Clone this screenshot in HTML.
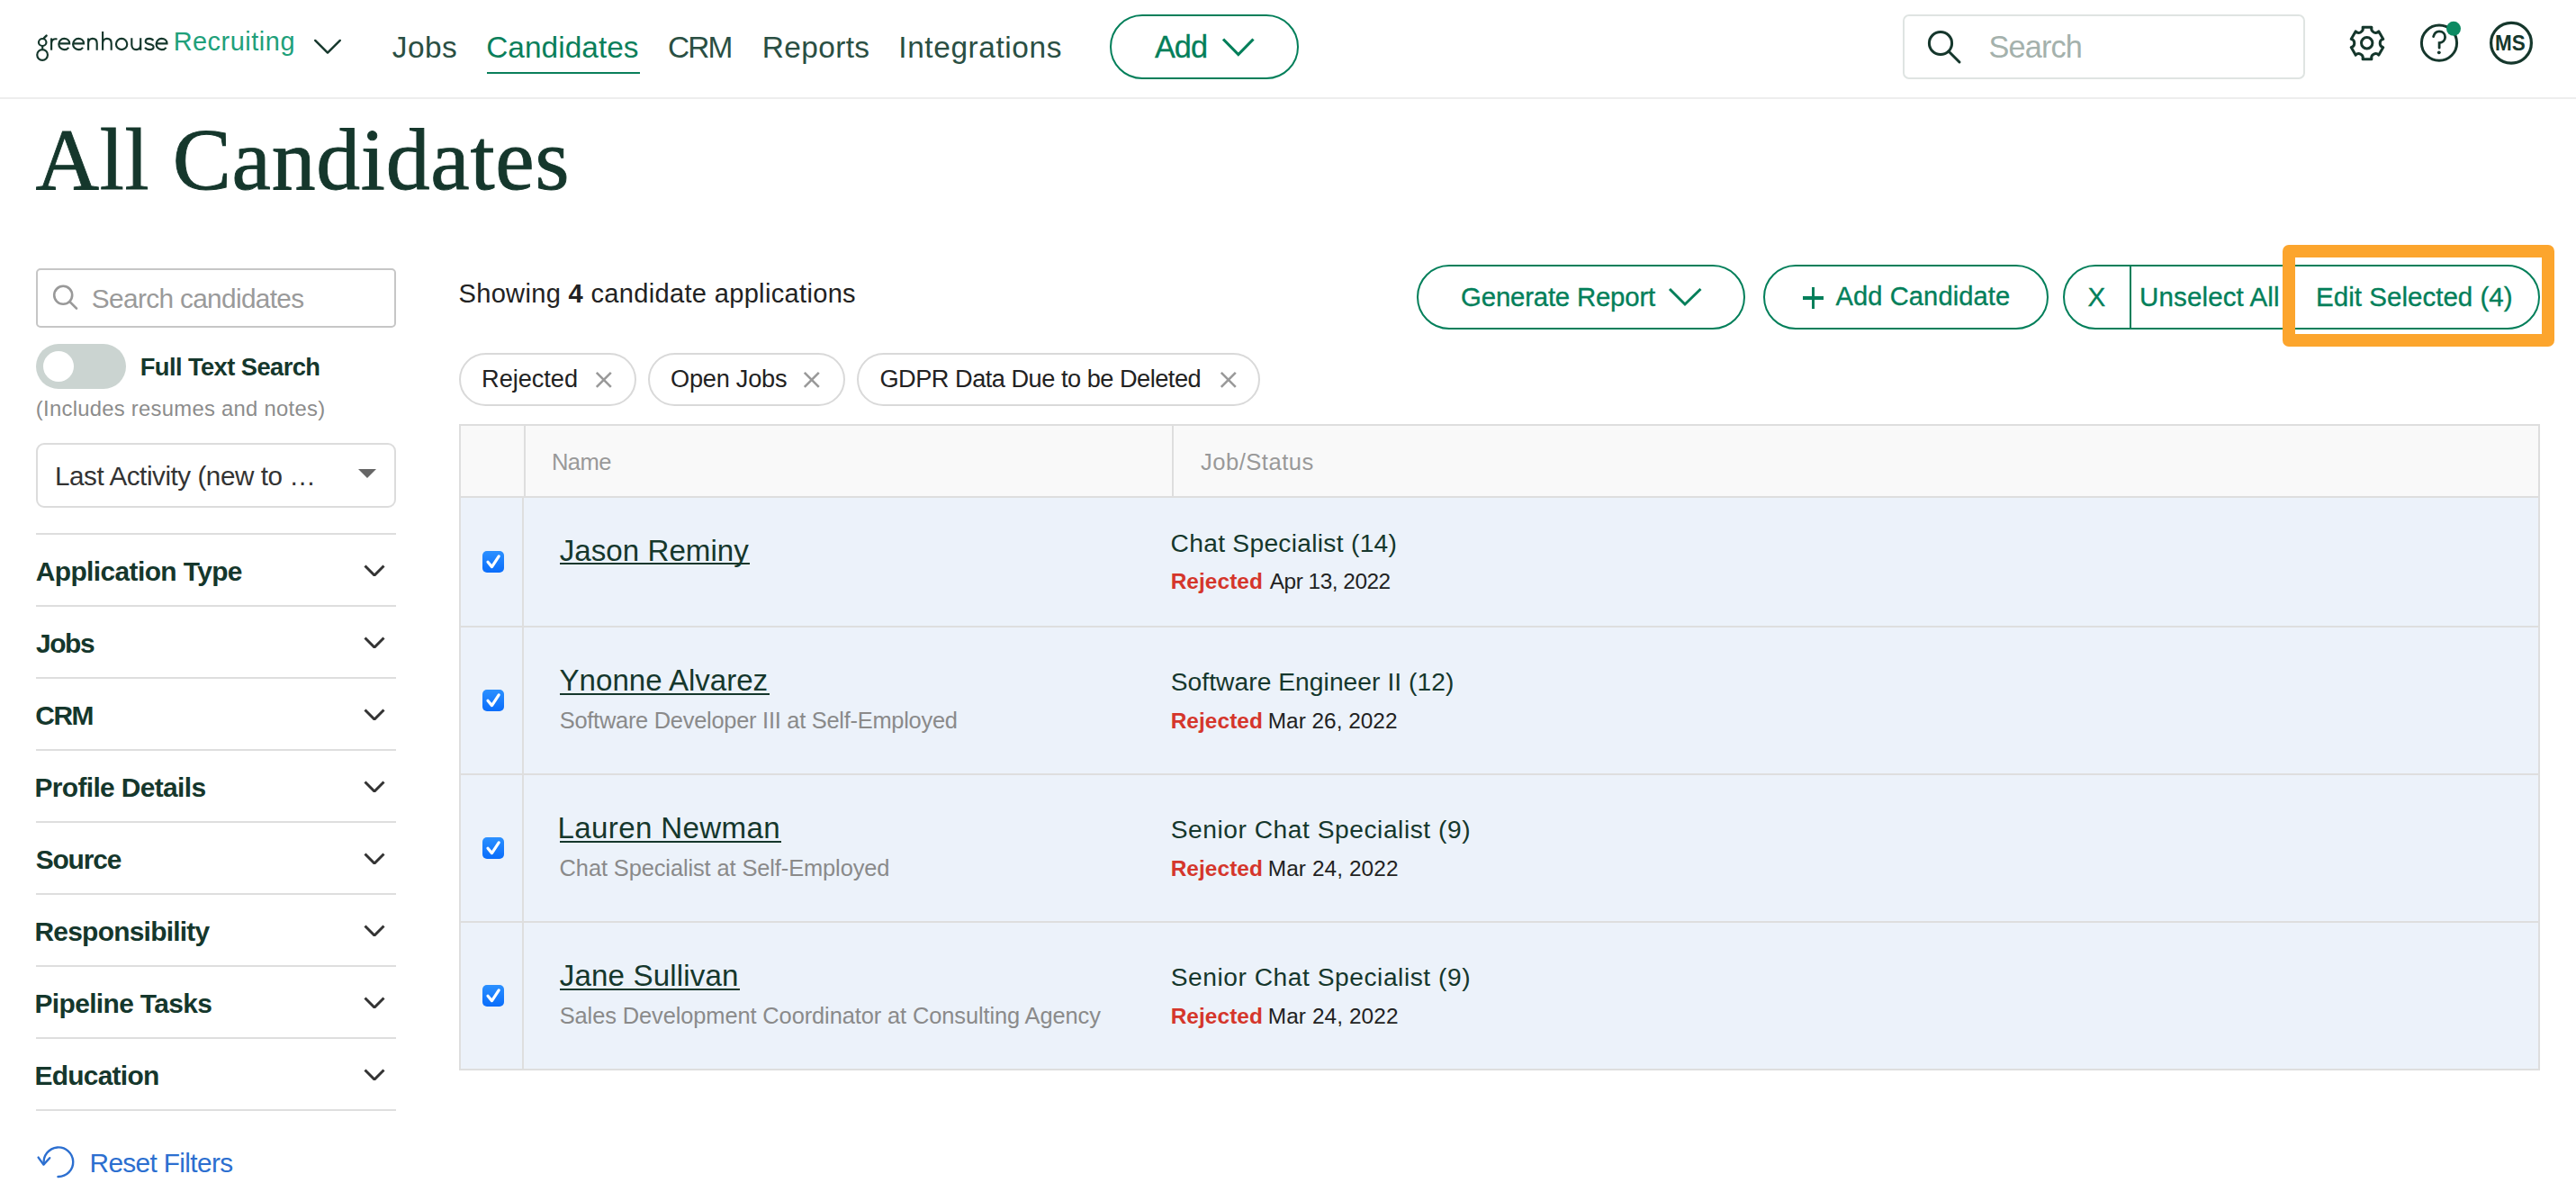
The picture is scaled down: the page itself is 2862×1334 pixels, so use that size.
<!DOCTYPE html>
<html><head><meta charset="utf-8"><style>
html,body{margin:0;padding:0;background:#fff;width:2862px;height:1334px;overflow:hidden;position:relative;font-family:"Liberation Sans",sans-serif;}
.t{position:absolute;white-space:nowrap;line-height:1;}
.r{position:absolute;}
b{font-weight:700;}
</style></head><body>
<svg class="r" style="left:0;top:0" width="200" height="80"><g fill="none" stroke="#15372c" stroke-width="2.15"><ellipse cx="47.2" cy="47" rx="4.25" ry="4"/><path d="M47.2 51 V54.4"/><circle cx="47.1" cy="61" r="5.85"/><path d="M49 42.2 L51.6 39.6" stroke-linecap="round" stroke-width="2.4"/><path d="M57.1 42.4 V55.7"/><path d="M57.1 47.5 C57.4 44.3 59.5 42.9 62.6 43.3" stroke-linecap="round"/><path d="M65.40 48.4 H77.20 C77.20 44.9 74.60 42.9 71.30 42.9 C68.00 42.9 65.30 45.6 65.30 49 C65.30 52.4 68.00 55.1 71.30 55.1 C73.50 55.1 75.20 54.3 76.30 52.8"/><path d="M81.20 48.4 H93.00 C93.00 44.9 90.40 42.9 87.10 42.9 C83.80 42.9 81.10 45.6 81.10 49 C81.10 52.4 83.80 55.1 87.10 55.1 C89.30 55.1 91.00 54.3 92.10 52.8"/><path d="M98.1 42.4 V55.7 M98.1 48.2 C98.1 44.8 100.3 42.9 102.9 42.9 C105.7 42.9 107.7 44.8 107.7 48.2 V55.7"/><path d="M114.1 35 V55.7 M114.1 48.2 C114.1 44.8 116.3 42.9 118.9 42.9 C121.7 42.9 123.7 44.8 123.7 48.2 V55.7"/><circle cx="135.1" cy="49" r="6.15"/><path d="M146.3 42.3 V49.8 C146.3 53.2 148.5 55.1 151.2 55.1 C154 55.1 156.2 53.2 156.2 49.8 M156.2 42.3 V55.7"/><path d="M170.2 45 C169.5 43.6 168 42.9 166 42.9 C163.4 42.9 161.7 44.2 161.7 46.1 C161.7 48.2 163.7 48.7 166.1 49.1 C168.7 49.5 170.6 50.3 170.6 52.2 C170.6 54.2 168.6 55.1 166 55.1 C163.7 55.1 162 54.3 161.1 52.8"/><path d="M173.70 48.4 H185.50 C185.50 44.9 182.90 42.9 179.60 42.9 C176.30 42.9 173.60 45.6 173.60 49 C173.60 52.4 176.30 55.1 179.60 55.1 C181.80 55.1 183.50 54.3 184.60 52.8"/></g></svg>
<div class="t" style="left:192.63px;top:31.62px;font-size:28.92px;color:#20a07a;letter-spacing:0.524px;">Recruiting</div>
<svg class="r" style="left:0;top:0" width="2862" height="110"><polyline points="350.2,44.9 364,58.6 377.8,44.9" fill="none" stroke="#15372c" stroke-width="2.4" stroke-linecap="round" stroke-linejoin="round"/></svg>
<div class="t" style="left:435.78px;top:36.30px;font-size:33.43px;color:#2a4f43;letter-spacing:0.462px;">Jobs</div>
<div class="t" style="left:540.20px;top:36.30px;font-size:33.43px;color:#0a7f5b;letter-spacing:0.027px;">Candidates</div>
<div class="r" style="left:541px;top:80px;width:170px;height:2px;background:#0a7f5b"></div>
<div class="t" style="left:742.10px;top:36.30px;font-size:33.43px;color:#2a4f43;letter-spacing:-1.928px;">CRM</div>
<div class="t" style="left:846.76px;top:36.30px;font-size:33.43px;color:#2a4f43;letter-spacing:0.373px;">Reports</div>
<div class="t" style="left:998.31px;top:36.30px;font-size:33.43px;color:#2a4f43;letter-spacing:0.583px;">Integrations</div>
<div class="r" style="left:1233px;top:16px;width:210px;height:71.5px;border:2.2px solid #037f5a;border-radius:40px;box-sizing:border-box"></div>
<div class="t" style="left:1282.93px;top:34.86px;font-size:34.30px;color:#037f5a;letter-spacing:-0.996px;-webkit-text-stroke:0.3px #037f5a;">Add</div>
<svg class="r" style="left:0;top:0" width="2862" height="110"><polyline points="1359,43.5 1375.8,60.5 1392.5,43.5" fill="none" stroke="#037f5a" stroke-width="3.2" stroke-linecap="butt" stroke-linejoin="miter"/></svg>
<div class="r" style="left:2114px;top:16px;width:447px;height:71.5px;border:2px solid #dfe4e2;border-radius:7px;box-sizing:border-box"></div>
<svg class="r" style="left:0;top:0" width="2862" height="110"><circle cx="2156" cy="48" r="12.6" fill="none" stroke="#15372c" stroke-width="3"/><line x1="2166" y1="58" x2="2177" y2="69" stroke="#15372c" stroke-width="3" stroke-linecap="round"/></svg>
<div class="t" style="left:2209.44px;top:34.96px;font-size:34.30px;color:#a4b1ac;letter-spacing:-0.836px;">Search</div>
<svg class="r" style="left:0;top:0" width="2862" height="110"><path d="M2625.08 30.27 L2634.92 30.27 A4.75 4.75 0 0 0 2642.90 34.88 L2642.90 34.88 L2647.81 43.39 A4.75 4.75 0 0 0 2647.81 52.61 L2647.81 52.61 L2642.90 61.12 A4.75 4.75 0 0 0 2634.92 65.73 L2634.92 65.73 L2625.08 65.73 A4.75 4.75 0 0 0 2617.10 61.12 L2617.10 61.12 L2612.19 52.61 A4.75 4.75 0 0 0 2612.19 43.39 L2612.19 43.39 L2617.10 34.88 A4.75 4.75 0 0 0 2625.08 30.27Z" fill="none" stroke="#15372c" stroke-width="3" stroke-linejoin="round"/><circle cx="2629.7" cy="47.8" r="6.2" fill="none" stroke="#15372c" stroke-width="3"/><circle cx="2710" cy="47.7" r="19.6" fill="none" stroke="#15372c" stroke-width="3"/><path d="M2703.6 40.6 C2704.6 36.6 2707 34.8 2710 34.8 C2714 34.8 2716.6 37.6 2716.6 41.2 C2716.6 45 2713.5 47.2 2710.1 47.6 L2710.1 53.2" fill="none" stroke="#15372c" stroke-width="2.8" stroke-linecap="round"/><circle cx="2709.8" cy="58.3" r="1.9" fill="#15372c"/><circle cx="2726" cy="31.8" r="8" fill="#0c8a62"/><circle cx="2790" cy="47.7" r="22.4" fill="none" stroke="#15372c" stroke-width="3.2"/></svg>
<div class="t" style="left:2772.42px;top:37.04px;font-size:23.69px;color:#15372c;font-weight:700;transform:scaleX(0.9484);transform-origin:1.58px 0;">MS</div>
<div class="r" style="left:0px;top:108px;width:2862px;height:2px;background:#ededed"></div>
<div class="t" style="left:39.45px;top:129.07px;font-size:97.71px;color:#15372c;font-family:'Liberation Serif',serif;letter-spacing:0.740px;-webkit-text-stroke:0.9px #15372c;">All Candidates</div>
<div class="r" style="left:40px;top:298px;width:400px;height:66px;border:2px solid #c6c6c6;border-radius:5px;box-sizing:border-box"></div>
<svg class="r" style="left:0;top:280" width="460" height="100"><circle cx="70.2" cy="47.8" r="10" fill="none" stroke="#999" stroke-width="2.6"/><line x1="77.5" y1="55.2" x2="85" y2="62.7" stroke="#999" stroke-width="2.6" stroke-linecap="round"/></svg>
<div class="t" style="left:101.85px;top:317.18px;font-size:29.80px;color:#9a9a9a;letter-spacing:-0.657px;">Search candidates</div>
<div class="r" style="left:40px;top:382px;width:100px;height:50px;background:#cbd4d1;border-radius:25px"></div>
<div class="r" style="left:48px;top:390px;width:34px;height:34px;background:#fff;border-radius:50%"></div>
<div class="t" style="left:155.67px;top:394.37px;font-size:27.33px;color:#15372c;font-weight:700;letter-spacing:-0.581px;">Full Text Search</div>
<div class="t" style="left:39.82px;top:441.72px;font-size:23.84px;color:#8c8c8c;letter-spacing:0.275px;">(Includes resumes and notes)</div>
<div class="r" style="left:40px;top:492px;width:400px;height:72px;border:2px solid #dcdcdc;border-radius:9px;box-sizing:border-box"></div>
<div class="t" style="left:61.07px;top:513.80px;font-size:29.65px;color:#333;letter-spacing:-0.454px;">Last Activity (new to …</div>
<svg class="r" style="left:390;top:515" width="40" height="25"><polygon points="8,6 28,6 18,16" fill="#666"/></svg>
<div class="r" style="left:40px;top:592px;width:400px;height:2.2000000000000455px;background:#dedede"></div>
<div class="t" style="left:39.75px;top:619.85px;font-size:29.94px;color:#15372c;font-weight:700;letter-spacing:-0.613px;">Application Type</div>
<svg class="r" style="left:400px;top:620px" width="32" height="20"><polyline points="5.5,8.5 16,19 26.5,8.5" fill="none" stroke="#333" stroke-width="3"/></svg>
<div class="r" style="left:40px;top:672px;width:400px;height:2.2000000000000455px;background:#dedede"></div>
<div class="t" style="left:40.05px;top:699.85px;font-size:29.94px;color:#15372c;font-weight:700;letter-spacing:-1.454px;">Jobs</div>
<svg class="r" style="left:400px;top:700px" width="32" height="20"><polyline points="5.5,8.5 16,19 26.5,8.5" fill="none" stroke="#333" stroke-width="3"/></svg>
<div class="r" style="left:40px;top:752px;width:400px;height:2.2000000000000455px;background:#dedede"></div>
<div class="t" style="left:39.27px;top:779.85px;font-size:29.94px;color:#15372c;font-weight:700;letter-spacing:-1.445px;">CRM</div>
<svg class="r" style="left:400px;top:780px" width="32" height="20"><polyline points="5.5,8.5 16,19 26.5,8.5" fill="none" stroke="#333" stroke-width="3"/></svg>
<div class="r" style="left:40px;top:832px;width:400px;height:2.2000000000000455px;background:#dedede"></div>
<div class="t" style="left:38.50px;top:859.85px;font-size:29.94px;color:#15372c;font-weight:700;letter-spacing:-0.651px;">Profile Details</div>
<svg class="r" style="left:400px;top:860px" width="32" height="20"><polyline points="5.5,8.5 16,19 26.5,8.5" fill="none" stroke="#333" stroke-width="3"/></svg>
<div class="r" style="left:40px;top:912px;width:400px;height:2.2000000000000455px;background:#dedede"></div>
<div class="t" style="left:39.64px;top:939.85px;font-size:29.94px;color:#15372c;font-weight:700;letter-spacing:-1.148px;">Source</div>
<svg class="r" style="left:400px;top:940px" width="32" height="20"><polyline points="5.5,8.5 16,19 26.5,8.5" fill="none" stroke="#333" stroke-width="3"/></svg>
<div class="r" style="left:40px;top:992px;width:400px;height:2.2000000000000455px;background:#dedede"></div>
<div class="t" style="left:38.50px;top:1019.85px;font-size:29.94px;color:#15372c;font-weight:700;letter-spacing:-0.765px;">Responsibility</div>
<svg class="r" style="left:400px;top:1020px" width="32" height="20"><polyline points="5.5,8.5 16,19 26.5,8.5" fill="none" stroke="#333" stroke-width="3"/></svg>
<div class="r" style="left:40px;top:1072px;width:400px;height:2.2000000000000455px;background:#dedede"></div>
<div class="t" style="left:38.50px;top:1099.85px;font-size:29.94px;color:#15372c;font-weight:700;letter-spacing:-0.642px;">Pipeline Tasks</div>
<svg class="r" style="left:400px;top:1100px" width="32" height="20"><polyline points="5.5,8.5 16,19 26.5,8.5" fill="none" stroke="#333" stroke-width="3"/></svg>
<div class="r" style="left:40px;top:1152px;width:400px;height:2.2000000000000455px;background:#dedede"></div>
<div class="t" style="left:38.50px;top:1179.85px;font-size:29.94px;color:#15372c;font-weight:700;letter-spacing:-0.746px;">Education</div>
<svg class="r" style="left:400px;top:1180px" width="32" height="20"><polyline points="5.5,8.5 16,19 26.5,8.5" fill="none" stroke="#333" stroke-width="3"/></svg>
<div class="r" style="left:40px;top:1232px;width:400px;height:2.2000000000000455px;background:#dedede"></div>
<svg class="r" style="left:0;top:1260" width="100" height="60"><path d="M48.8 33 A16.3 16.3 0 1 1 64.5 47" fill="none" stroke="#2c6fd0" stroke-width="2.4" stroke-linecap="round"/><polyline points="42.6,25.6 48.4,33.6 55.2,26.2" fill="none" stroke="#2c6fd0" stroke-width="2.4" stroke-linecap="round" stroke-linejoin="round"/></svg>
<div class="t" style="left:99.56px;top:1277.48px;font-size:29.80px;color:#2c6fd0;letter-spacing:-0.643px;">Reset Filters</div>
<div class="t" style="left:509.48px;top:312.29px;font-size:29.07px;color:#222;letter-spacing:0.315px;">Showing <b>4</b> candidate applications</div>
<div class="r" style="left:510.2px;top:392px;width:197.00000000000006px;height:58.5px;border:2px solid #d9d9d9;border-radius:30px;box-sizing:border-box"></div>
<div class="t" style="left:535.07px;top:406.79px;font-size:27.18px;color:#222;letter-spacing:-0.042px;">Rejected</div>
<svg class="r" style="left:658.7px;top:410px" width="24" height="24"><path d="M3.8 3.8 L19.8 19.8 M19.8 3.8 L3.8 19.8" stroke="#999" stroke-width="2.6"/></svg>
<div class="r" style="left:720.2px;top:392px;width:219.19999999999993px;height:58.5px;border:2px solid #d9d9d9;border-radius:30px;box-sizing:border-box"></div>
<div class="t" style="left:745.01px;top:406.79px;font-size:27.18px;color:#222;letter-spacing:-0.241px;">Open Jobs</div>
<svg class="r" style="left:890.0px;top:410px" width="24" height="24"><path d="M3.8 3.8 L19.8 19.8 M19.8 3.8 L3.8 19.8" stroke="#999" stroke-width="2.6"/></svg>
<div class="r" style="left:952.3px;top:392px;width:447.9000000000001px;height:58.5px;border:2px solid #d9d9d9;border-radius:30px;box-sizing:border-box"></div>
<div class="t" style="left:977.43px;top:406.79px;font-size:27.18px;color:#222;letter-spacing:-0.493px;">GDPR Data Due to be Deleted</div>
<svg class="r" style="left:1352.5px;top:410px" width="24" height="24"><path d="M3.8 3.8 L19.8 19.8 M19.8 3.8 L3.8 19.8" stroke="#999" stroke-width="2.6"/></svg>
<div class="r" style="left:1574px;top:294px;width:365px;height:71.5px;border:2.2px solid #037f5a;border-radius:40px;box-sizing:border-box"></div>
<div class="t" style="left:1623.12px;top:314.65px;font-size:29.36px;color:#037f5a;letter-spacing:-0.190px;-webkit-text-stroke:0.35px #037f5a;">Generate Report</div>
<svg class="r" style="left:1850px;top:315px" width="45" height="30"><polyline points="5,6 22,23 39.5,6" fill="none" stroke="#037f5a" stroke-width="3"/></svg>
<div class="r" style="left:1959px;top:294px;width:317px;height:71.5px;border:2.2px solid #037f5a;border-radius:40px;box-sizing:border-box"></div>
<div class="r" style="left:2002.5px;top:329.3px;width:23.799999999999955px;height:3.599999999999966px;background:#037f5a"></div>
<div class="r" style="left:2012.6px;top:319px;width:3.6000000000001364px;height:24px;background:#037f5a"></div>
<div class="t" style="left:2039.44px;top:315.09px;font-size:29.07px;color:#037f5a;letter-spacing:0.122px;-webkit-text-stroke:0.35px #037f5a;">Add Candidate</div>
<div class="r" style="left:2292px;top:294px;width:530px;height:71.5px;border:2.2px solid #037f5a;border-radius:40px;box-sizing:border-box"></div>
<div class="r" style="left:2365.5px;top:294px;width:2.300000000000182px;height:71.5px;background:#037f5a"></div>
<div class="t" style="left:2319.54px;top:314.92px;font-size:29.51px;color:#037f5a;-webkit-text-stroke:0.35px #037f5a;">X</div>
<div class="t" style="left:2377.12px;top:314.92px;font-size:29.51px;color:#037f5a;letter-spacing:0.119px;-webkit-text-stroke:0.35px #037f5a;">Unselect All</div>
<div class="t" style="left:2573.08px;top:314.92px;font-size:29.51px;color:#037f5a;letter-spacing:0.027px;-webkit-text-stroke:0.35px #037f5a;">Edit Selected (4)</div>
<div class="r" style="left:2536.4px;top:272.4px;width:301.5999999999999px;height:113.0px;border:14px solid #fca52d;border-radius:7px;box-sizing:border-box"></div>
<div class="r" style="left:510px;top:471px;width:2312px;height:718px;border:2px solid #dedede;box-sizing:border-box;background:#ecf2fa"></div>
<div class="r" style="left:512px;top:473px;width:2308px;height:78px;background:#f9f9f9"></div>
<div class="r" style="left:512px;top:551px;width:2308px;height:2px;background:#dedede"></div>
<div class="r" style="left:582px;top:473px;width:2px;height:78px;background:#dedede"></div>
<div class="r" style="left:1302px;top:473px;width:2px;height:78px;background:#dedede"></div>
<div class="r" style="left:580px;top:553px;width:2px;height:634px;background:#dedede"></div>
<div class="r" style="left:512px;top:695px;width:2308px;height:2px;background:#dedede"></div>
<div class="r" style="left:512px;top:859px;width:2308px;height:2px;background:#dedede"></div>
<div class="r" style="left:512px;top:1023px;width:2308px;height:2px;background:#dedede"></div>
<div class="t" style="left:612.90px;top:501.23px;font-size:25.60px;color:#999;letter-spacing:-0.551px;">Name</div>
<div class="t" style="left:1333.90px;top:500.73px;font-size:25.60px;color:#999;letter-spacing:0.493px;">Job/Status</div>
<svg class="r" style="left:536px;top:612.0px" width="24" height="24"><defs><linearGradient id="cg0" x1="0" y1="0" x2="0" y2="1"><stop offset="0" stop-color="#2b90ff"/><stop offset="1" stop-color="#0a6dfb"/></linearGradient></defs><rect x="0" y="0" width="24" height="24" rx="5" fill="url(#cg0)"/><polyline points="6,12.3 10.5,17.6 18.2,5.9" fill="none" stroke="#fff" stroke-width="3.2" stroke-linecap="round" stroke-linejoin="round"/></svg>
<div class="t" style="left:621.78px;top:594.75px;font-size:33.14px;color:#15372c;letter-spacing:0.016px;">Jason Reminy</div>
<div class="r" style="left:622.3px;top:625.3px;width:211.10000000000002px;height:2.0px;background:#15372c"></div>
<div class="t" style="left:1300.57px;top:588.83px;font-size:28.20px;color:#15372c;letter-spacing:0.285px;">Chat Specialist (14)</div>
<div class="t" style="left:1300.67px;top:634.43px;font-size:24.42px;color:#d5362b;font-weight:700;letter-spacing:0.073px;">Rejected</div>
<div class="t" style="left:1410.75px;top:634.43px;font-size:24.42px;color:#222;letter-spacing:-0.486px;">Apr 13, 2022</div>
<svg class="r" style="left:536px;top:766.0px" width="24" height="24"><defs><linearGradient id="cg1" x1="0" y1="0" x2="0" y2="1"><stop offset="0" stop-color="#2b90ff"/><stop offset="1" stop-color="#0a6dfb"/></linearGradient></defs><rect x="0" y="0" width="24" height="24" rx="5" fill="url(#cg1)"/><polyline points="6,12.3 10.5,17.6 18.2,5.9" fill="none" stroke="#fff" stroke-width="3.2" stroke-linecap="round" stroke-linejoin="round"/></svg>
<div class="t" style="left:621.57px;top:739.45px;font-size:33.14px;color:#15372c;letter-spacing:-0.032px;">Ynonne Alvarez</div>
<div class="r" style="left:622.3px;top:770.0px;width:232.5px;height:2.0px;background:#15372c"></div>
<div class="t" style="left:621.74px;top:788.37px;font-size:25.44px;color:#8a8a8a;letter-spacing:-0.269px;">Software Developer III at Self-Employed</div>
<div class="t" style="left:1300.72px;top:743.03px;font-size:28.20px;color:#15372c;letter-spacing:0.053px;">Software Engineer II (12)</div>
<div class="t" style="left:1300.67px;top:789.23px;font-size:24.42px;color:#d5362b;font-weight:700;letter-spacing:0.073px;">Rejected</div>
<div class="t" style="left:1408.80px;top:789.23px;font-size:24.42px;color:#222;letter-spacing:-0.013px;">Mar 26, 2022</div>
<svg class="r" style="left:536px;top:930.0px" width="24" height="24"><defs><linearGradient id="cg2" x1="0" y1="0" x2="0" y2="1"><stop offset="0" stop-color="#2b90ff"/><stop offset="1" stop-color="#0a6dfb"/></linearGradient></defs><rect x="0" y="0" width="24" height="24" rx="5" fill="url(#cg2)"/><polyline points="6,12.3 10.5,17.6 18.2,5.9" fill="none" stroke="#fff" stroke-width="3.2" stroke-linecap="round" stroke-linejoin="round"/></svg>
<div class="t" style="left:619.58px;top:903.45px;font-size:33.14px;color:#15372c;letter-spacing:0.340px;">Lauren Newman</div>
<div class="r" style="left:622.3px;top:934.0px;width:246.10000000000002px;height:2.0px;background:#15372c"></div>
<div class="t" style="left:621.61px;top:952.37px;font-size:25.44px;color:#8a8a8a;letter-spacing:-0.116px;">Chat Specialist at Self-Employed</div>
<div class="t" style="left:1300.72px;top:907.03px;font-size:28.20px;color:#15372c;letter-spacing:0.529px;">Senior Chat Specialist (9)</div>
<div class="t" style="left:1300.67px;top:953.23px;font-size:24.42px;color:#d5362b;font-weight:700;letter-spacing:0.073px;">Rejected</div>
<div class="t" style="left:1408.80px;top:953.23px;font-size:24.42px;color:#222;letter-spacing:0.078px;">Mar 24, 2022</div>
<svg class="r" style="left:536px;top:1094.0px" width="24" height="24"><defs><linearGradient id="cg3" x1="0" y1="0" x2="0" y2="1"><stop offset="0" stop-color="#2b90ff"/><stop offset="1" stop-color="#0a6dfb"/></linearGradient></defs><rect x="0" y="0" width="24" height="24" rx="5" fill="url(#cg3)"/><polyline points="6,12.3 10.5,17.6 18.2,5.9" fill="none" stroke="#fff" stroke-width="3.2" stroke-linecap="round" stroke-linejoin="round"/></svg>
<div class="t" style="left:621.78px;top:1067.45px;font-size:33.14px;color:#15372c;letter-spacing:0.145px;">Jane Sullivan</div>
<div class="r" style="left:622.3px;top:1098.0px;width:199.89999999999998px;height:2.0px;background:#15372c"></div>
<div class="t" style="left:621.74px;top:1116.37px;font-size:25.44px;color:#8a8a8a;letter-spacing:-0.112px;">Sales Development Coordinator at Consulting Agency</div>
<div class="t" style="left:1300.72px;top:1071.03px;font-size:28.20px;color:#15372c;letter-spacing:0.529px;">Senior Chat Specialist (9)</div>
<div class="t" style="left:1300.67px;top:1117.23px;font-size:24.42px;color:#d5362b;font-weight:700;letter-spacing:0.073px;">Rejected</div>
<div class="t" style="left:1408.80px;top:1117.23px;font-size:24.42px;color:#222;letter-spacing:0.078px;">Mar 24, 2022</div>
</body></html>
